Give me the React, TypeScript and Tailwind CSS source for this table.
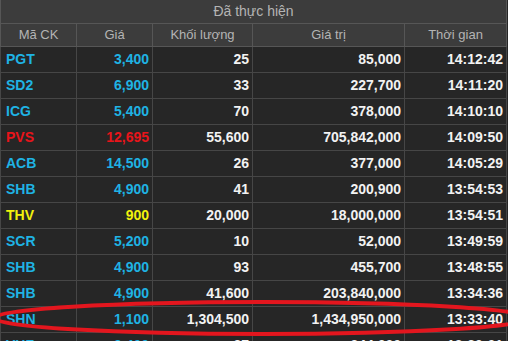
const rows = [
  { code: 'PGT', price: '3,400', vol: '25', value: '85,000', time: '14:12:42', color: 'text-[#1fb3e4]' },
  { code: 'SD2', price: '6,900', vol: '33', value: '227,700', time: '14:11:20', color: 'text-[#1fb3e4]' },
  { code: 'ICG', price: '5,400', vol: '70', value: '378,000', time: '14:10:10', color: 'text-[#1fb3e4]' },
  { code: 'PVS', price: '12,695', vol: '55,600', value: '705,842,000', time: '14:09:50', color: 'text-[#e8141a]' },
  { code: 'ACB', price: '14,500', vol: '26', value: '377,000', time: '14:05:29', color: 'text-[#1fb3e4]' },
  { code: 'SHB', price: '4,900', vol: '41', value: '200,900', time: '13:54:53', color: 'text-[#1fb3e4]' },
  { code: 'THV', price: '900', vol: '20,000', value: '18,000,000', time: '13:54:51', color: 'text-[#f2f20c]' },
  { code: 'SCR', price: '5,200', vol: '10', value: '52,000', time: '13:49:59', color: 'text-[#1fb3e4]' },
  { code: 'SHB', price: '4,900', vol: '93', value: '455,700', time: '13:48:55', color: 'text-[#1fb3e4]' },
  { code: 'SHB', price: '4,900', vol: '41,600', value: '203,840,000', time: '13:34:36', color: 'text-[#1fb3e4]' },
  { code: 'SHN', price: '1,100', vol: '1,304,500', value: '1,434,950,000', time: '13:33:40', color: 'text-[#1fb3e4]' },
  { code: 'VHF', price: '3,400', vol: '27', value: '344,000', time: '13:29:01', color: 'text-[#1fb3e4]' },
];

export default function App() {
  return (
    <div className="relative w-[508px] h-[341px] overflow-hidden bg-[#262626] font-['Liberation_Sans',Arial,sans-serif]">
      <table className="w-[506px] border-collapse table-fixed">
        <colgroup>
          <col className="w-[76px]" />
          <col className="w-[76px]" />
          <col className="w-[100px]" />
          <col className="w-[152px]" />
          <col className="w-[102px]" />
        </colgroup>
        <thead className="bg-[#3c3c3c] text-[#b4b4b4] text-[13px]">
          <tr className="h-[23px]">
            <th colSpan={5} className="font-normal text-[14px] border border-[#565656] border-t-0">
              Đã thực hiện
            </th>
          </tr>
          <tr className="h-[23px]">
            <th className="font-normal border border-[#565656]">Mã CK</th>
            <th className="font-normal border border-[#565656]">Giá</th>
            <th className="font-normal border border-[#565656]">Khối lượng</th>
            <th className="font-normal border border-[#565656]">Giá trị</th>
            <th className="font-normal border border-[#565656]">Thời gian</th>
          </tr>
        </thead>
        <tbody className="text-[14px] font-bold">
          {rows.map((r, i) => (
            <tr key={i} className="h-[26px]">
              <td className={`border border-[#464646] pl-[5px] ${r.color}`}>{r.code}</td>
              <td className={`border border-[#464646] text-right pr-[3px] ${r.color}`}>{r.price}</td>
              <td className="border border-[#464646] text-right pr-[3px] text-[#f2f2f2]">{r.vol}</td>
              <td className="border border-[#464646] text-right pr-[3px] text-[#f2f2f2]">{r.value}</td>
              <td className="border border-[#464646] text-right pr-[3px] text-[#f2f2f2]">{r.time}</td>
            </tr>
          ))}
        </tbody>
      </table>
      {/* red marker circled around the SHN row */}
      <svg className="absolute left-0 top-0 pointer-events-none" width="508" height="341">
        <ellipse cx="262" cy="318" rx="268" ry="16" fill="none" stroke="#e3161e" strokeWidth="4" />
      </svg>
    </div>
  );
}
